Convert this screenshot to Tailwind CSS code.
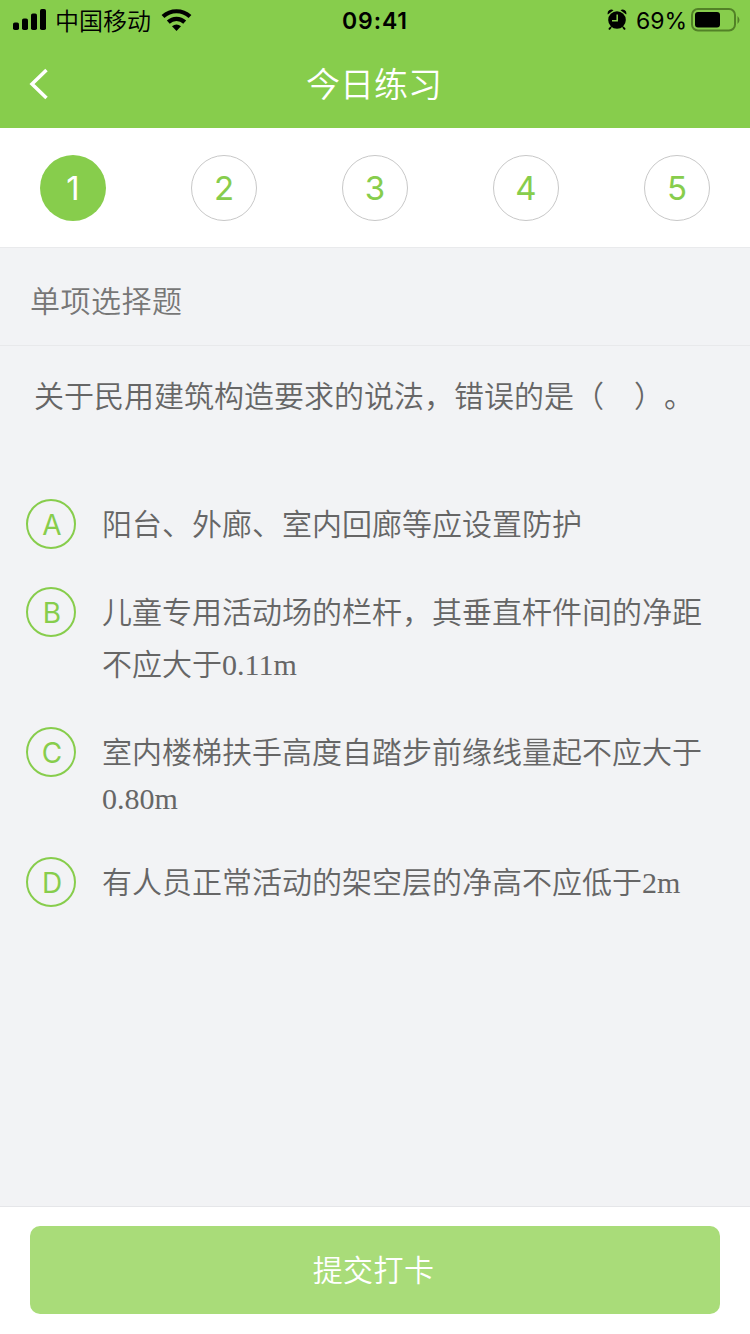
<!DOCTYPE html>
<html lang="zh-CN">
<head>
<meta charset="utf-8">
<title>今日练习</title>
<script src="https://cdn.jsdelivr.net/npm/@tailwindcss/browser@4"></script>
</head>
<body class="flex h-[1334px] w-[750px] flex-col overflow-hidden bg-[#f2f3f5] font-['Inter','Noto_Sans_CJK_SC',sans-serif] text-[#666] [text-spacing-trim:space-all]">
<header class="bg-[#87cd4c]">
  <div class="grid h-10 grid-cols-3 items-center text-black">
    <div class="flex items-center pl-[13px]">
      <svg class="h-[22px] w-[34px]" viewBox="0 0 34 22"><rect x="0" y="13.500" width="6" height="7.500" rx="1.800"/><rect x="9" y="9.500" width="6" height="11.500" rx="1.800"/><rect x="18" y="4.500" width="6" height="16.500" rx="1.800"/><rect x="27" y="0" width="6" height="21" rx="1.800"/></svg>
      <span class="ml-2 pt-[3px] text-[24px] leading-[37px] font-[350] whitespace-nowrap">中国移动</span>
      <svg class="ml-[10px] h-[24px] w-[32px]" viewBox="0 0 32 24"><g fill="none" stroke="#000" stroke-width="4.200"><path d="M2 8.500a20 20 0 0 1 27 0"/><path d="M7.300 14.100a12 12 0 0 1 16.400 0"/></g><path d="M11 18.300q4.500-3.400 9 0l-4.500 4.700z"/></svg>
    </div>
    <div class="pt-0.5 text-center text-[23px] leading-[38px] font-semibold tracking-[0.9px]">09:41</div>
    <div class="flex items-center justify-end pr-[10px]">
      <svg class="h-[22px] w-[20px]" viewBox="0 0 20 22"><circle cx="10" cy="11" r="8.800"/><path d="M.8 5.500A3.800 3.800 0 0 1 6.500 1.200zM19.200 5.500A3.800 3.800 0 0 0 13.500 1.200z"/><path d="M4 18l-2 2.500M16 18l2 2.500" stroke="#000" stroke-width="2"/><path d="M10.200 5.500v6.200H5" fill="none" stroke="#87cd4c" stroke-width="1.500"/></svg>
      <span class="ml-[9px] pt-0.5 text-[23px] leading-[38px] font-normal tracking-[0px]">69%</span>
      <svg class="ml-[4px] h-[24px] w-[49px]" viewBox="0 0 49 24"><rect x="1" y="1" width="43" height="21.500" rx="6" fill="none" stroke="#528127" stroke-width="2"/><rect x="4" y="4" width="25" height="15.500" rx="3"/><path d="M46.500 8q4 4 0 8z" fill="#528127"/></svg>
    </div>
  </div>
  <div class="grid h-[88px] grid-cols-3 items-center text-white">
    <svg class="ml-[28px] h-[32px] w-[22px]" viewBox="0 0 22 32" fill="none" stroke="currentColor" stroke-width="3.500"><path d="M18.500 2L4 16l14.500 14"/></svg>
    <h1 class="pr-0.5 text-center text-[34px] font-[350]">今日练习</h1>
  </div>
</header>
<nav class="flex h-[120px] items-center justify-between border-b border-[#e9eaec] bg-white px-10 text-[33px] font-normal text-[#87cd4c]">
  <span class="flex size-[66px] items-center justify-center rounded-full bg-[#87cd4c] pt-0.5 text-white">1</span>
  <span class="flex size-[66px] items-center justify-center rounded-full border border-[#c8c8c8] pt-0.5">2</span>
  <span class="flex size-[66px] items-center justify-center rounded-full border border-[#c8c8c8] pt-0.5">3</span>
  <span class="flex size-[66px] items-center justify-center rounded-full border border-[#c8c8c8] pt-0.5">4</span>
  <span class="flex size-[66px] items-center justify-center rounded-full border border-[#c8c8c8] pt-0.5">5</span>
</nav>
<h2 class="flex h-[98px] items-center border-b border-[#e8e9eb] pt-[10px] pl-[30px] text-[30px] font-[350] tracking-[0.5px] text-[#777]">单项选择题</h2>
<main class="flex-1 pt-[26px] font-['Liberation_Serif','Noto_Sans_CJK_SC',serif] text-[30px] font-[350]">
  <p class="pl-[34px] leading-[50px] whitespace-nowrap">关于民用建筑构造要求的说法，错误的是（　）。</p>
  <ul class="mt-[77px] flex flex-col gap-[38px] pl-[26px]">
    <li class="flex h-[50px] gap-[26px]"><span class="flex size-[50px] shrink-0 items-center justify-center rounded-full border-2 border-[#87cd4c] pt-0.5 pl-0.5 font-['Inter'] text-[28px] font-normal text-[#87cd4c]">A</span><p class="pt-px leading-[50px]">阳台、外廊、室内回廊等应设置防护</p></li>
    <li class="flex h-[102px] gap-[26px]"><span class="flex size-[50px] shrink-0 items-center justify-center rounded-full border-2 border-[#87cd4c] pt-0.5 pl-0.5 font-['Inter'] text-[28px] font-normal text-[#87cd4c]">B</span><p class="leading-[52px]">儿童专用活动场的栏杆，其垂直杆件间的净距<br>不应大于0.11m</p></li>
    <li class="flex h-[92px] gap-[26px]"><span class="flex size-[50px] shrink-0 items-center justify-center rounded-full border-2 border-[#87cd4c] pt-0.5 pl-0.5 font-['Inter'] text-[28px] font-normal text-[#87cd4c]">C</span><p class="pt-px leading-[50px]">室内楼梯扶手高度自踏步前缘线量起不应大于<br><span class="block leading-[42px]">0.80m</span></p></li>
    <li class="flex h-[50px] gap-[26px]"><span class="flex size-[50px] shrink-0 items-center justify-center rounded-full border-2 border-[#87cd4c] pt-0.5 pl-0.5 font-['Inter'] text-[28px] font-normal text-[#87cd4c]">D</span><p class="pt-px leading-[50px]">有人员正常活动的架空层的净高不应低于2m</p></li>
  </ul>
</main>
<footer class="h-[128px] border-t border-[#e5e6e9] bg-white px-[30px] pt-[19px]">
  <button class="block h-[88px] w-full rounded-[10px] bg-[#a9dc79] pt-px pr-[3px] text-[30px] font-[350] tracking-[0.4px] text-white">提交打卡</button>
</footer>
</body>
</html>
